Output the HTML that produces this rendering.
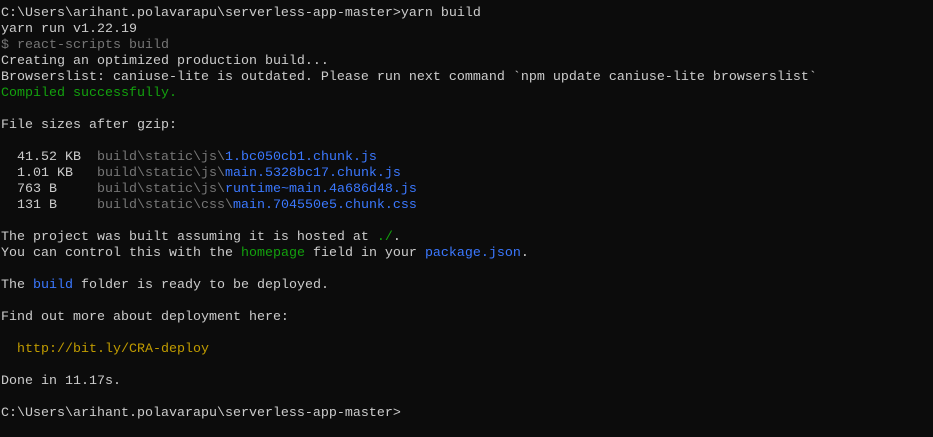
<!DOCTYPE html><html><head><style>
html,body{margin:0;padding:0;background:#0c0c0c;width:933px;height:437px;overflow:hidden}
pre{margin:0;padding:6px 0 0 1px;font-family:"Liberation Mono",monospace;font-size:13.33px;line-height:16px;color:#cccccc;white-space:pre}
.g{color:#767676}.gr{color:#13a10e}.b{color:#3b78ff}.y{color:#c19c00}
</style></head><body><pre>C:\Users\arihant.polavarapu\serverless-app-master>yarn build
yarn run v1.22.19
<span class="g">$ react-scripts build</span>
Creating an optimized production build...
Browserslist: caniuse-lite is outdated. Please run next command `npm update caniuse-lite browserslist`
<span class="gr">Compiled successfully.</span>

File sizes after gzip:

  41.52 KB  <span class="g">build\static\js\</span><span class="b">1.bc050cb1.chunk.js</span>
  1.01 KB   <span class="g">build\static\js\</span><span class="b">main.5328bc17.chunk.js</span>
  763 B     <span class="g">build\static\js\</span><span class="b">runtime~main.4a686d48.js</span>
  131 B     <span class="g">build\static\css\</span><span class="b">main.704550e5.chunk.css</span>

The project was built assuming it is hosted at <span class="gr">./</span>.
You can control this with the <span class="gr">homepage</span> field in your <span class="b">package.json</span>.

The <span class="b">build</span> folder is ready to be deployed.

Find out more about deployment here:

  <span class="y">http://bit.ly/CRA-deploy</span>

Done in 11.17s.

C:\Users\arihant.polavarapu\serverless-app-master></pre></body></html>
